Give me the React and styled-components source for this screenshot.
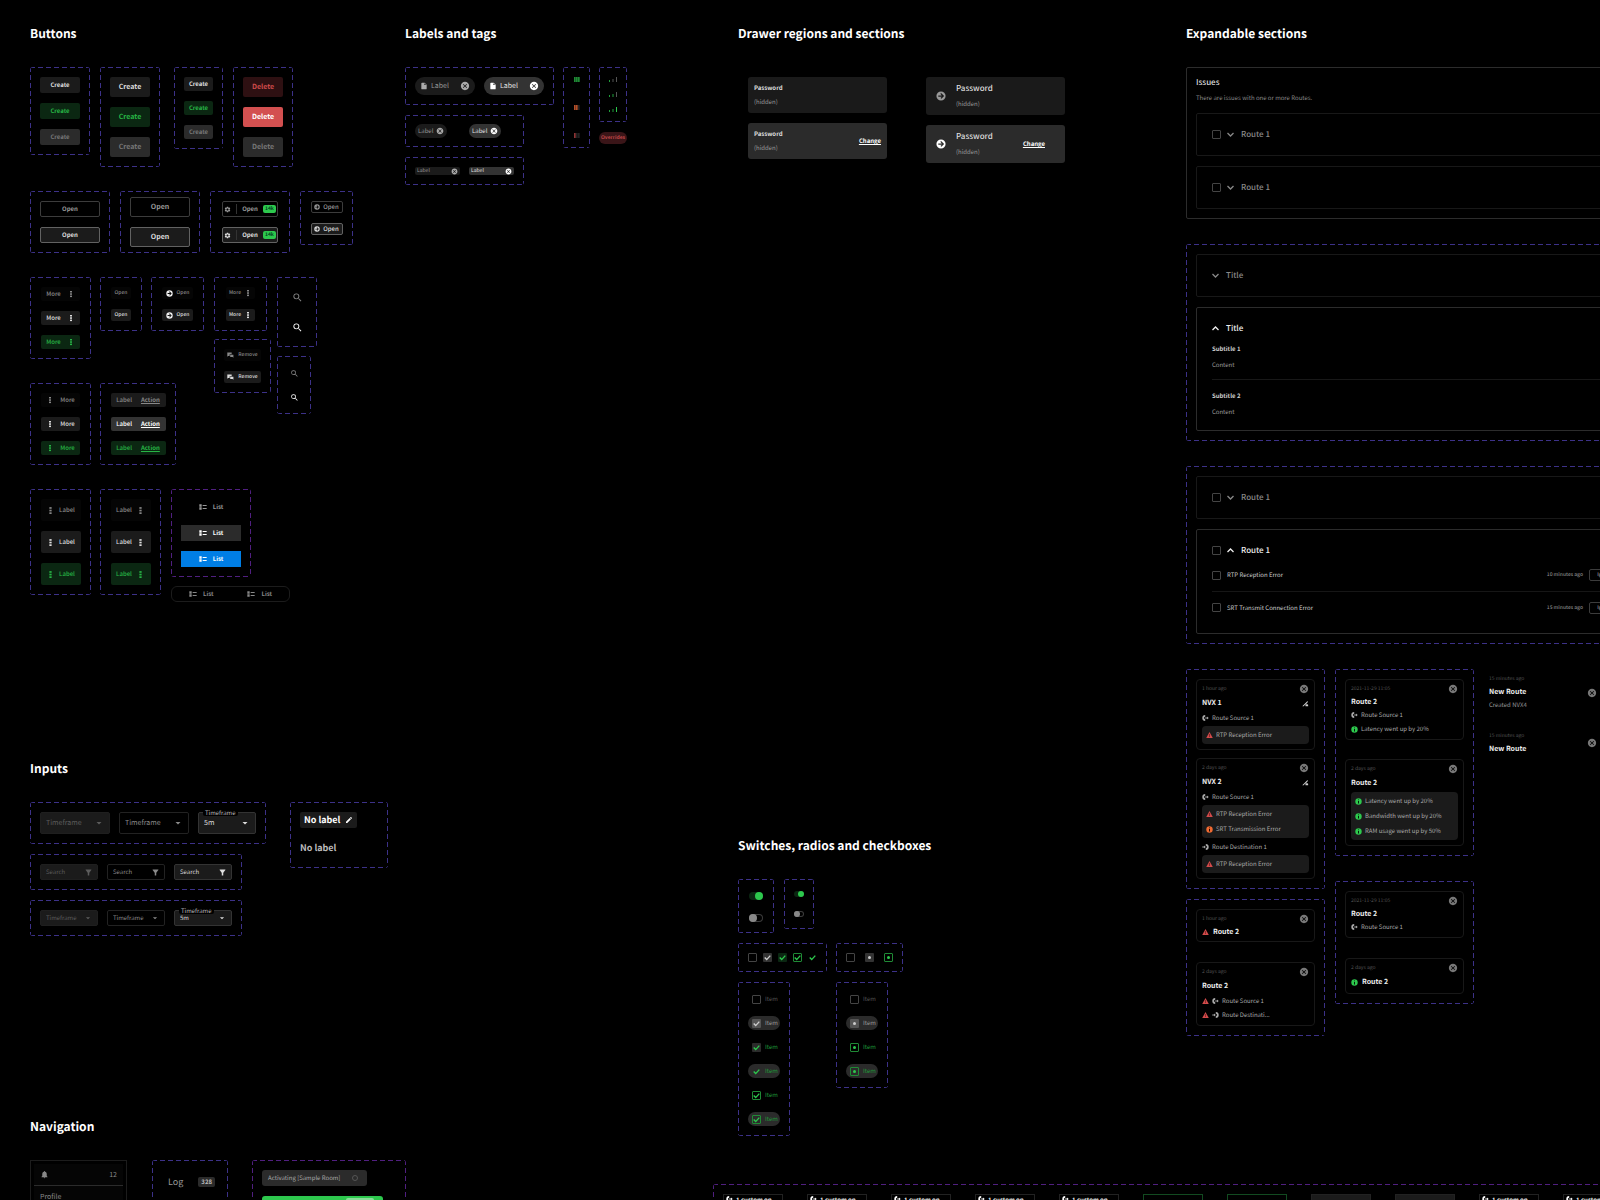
import React from 'react'
import styled, { createGlobalStyle, css } from 'styled-components'
import {
    MdArrowDropDown,
    MdCancel,
    MdEdit,
    MdFilterAlt,
    MdInsertDriveFile,
    MdNotifications,
    MdSearch,
    MdSettings,
} from 'react-icons/md'

/* ---------- icons ---------- */

const ArrowCircle = () => (
    <svg viewBox="0 0 24 24" width="1em" height="1em" fill="currentColor">
        <path fillRule="evenodd" d="M12 1a11 11 0 1 0 0 22 11 11 0 0 0 0-22zM11 5.500l2-.3L19.500 12 13 18.800l-2.200-2 3-3.300H5.500v-3h8.300l-3-3.200z" />
    </svg>
)
const MoreIcon = ({ size = 8 }) => (
    <svg viewBox="0 0 8 8" width={size} height={size} fill="currentColor">
        <rect x="3" y="1" width="2" height="1.500" />
        <rect x="3" y="3.300" width="2" height="1.500" />
        <rect x="3" y="5.600" width="2" height="1.500" />
    </svg>
)
const ListIcon = () => (
    <svg viewBox="0 0 24 16" width="8" height="6" fill="currentColor">
        <path d="M1 0h7v7H1zM1 9h7v7H1zM11 2h12v3H11zM11 11h12v3H11z" />
    </svg>
)
const RemoveIcon = () => (
    <svg viewBox="0 0 24 20" width="7" height="6" fill="currentColor">
        <path d="M1 1h15v6H9v6H4l-3 3z" />
        <path d="M11 9h11v10l-3-2.500h-8z" />
    </svg>
)
const SourceIcon = () => (
    <svg viewBox="0 0 24 20" width="7" height="6" fill="currentColor">
        <path d="M11 0v6a4 4 0 0 0 0 8v6a10 10 0 0 1 0-20z" />
        <path d="M11 8h6V5l6 5-6 5v-3h-6z" />
    </svg>
)
const DestinationIcon = () => (
    <svg viewBox="0 0 24 20" width="7" height="6" fill="currentColor">
        <path d="M13 0a10 10 0 0 1 0 20v-6a4 4 0 0 0 0-8z" />
        <path d="M1 8h6V5l6 5-6 5v-3H1z" />
    </svg>
)
const DeviceIcon = () => (
    <svg viewBox="0 0 24 24" width="7" height="7" fill="#ccc">
        <path d="M1 21 18 4l3 2-9 10h-2l-4 5z" />
        <path d="M12 21v-4l5-3 4 2v5z" />
    </svg>
)
const WarningIcon = () => (
    <svg viewBox="0 0 24 22" width="7" height="6">
        <path d="M12 0 24 22H0z" fill="#d24a4a" />
        <path d="M11 8h2v6h-2zM11 16h2v2.500h-2z" fill="#100" />
    </svg>
)
const InfoIcon = ({ color = '#2dc84d' }) => (
    <svg viewBox="0 0 24 24" width="7" height="7">
        <circle cx="12" cy="12" r="11" fill={color} />
        <path d="M10.500 5h3v3h-3zM10.500 10h3v9h-3z" fill="#000" />
    </svg>
)
const Chevron = ({ up }) => (
    <svg viewBox="0 0 7 7" width="7" height="7" fill="none" stroke="currentColor" strokeWidth="1.300">
        <path d={up ? 'M.5 5 3.500 2l3 3' : 'M.5 2l3 3 3-3'} />
    </svg>
)
const Check = () => (
    <svg viewBox="0 0 7 7" width="7" height="7" fill="none" stroke="currentColor" strokeWidth="1.400">
        <path d="M.7 3.600l2 2L6.300 1.600" />
    </svg>
)
const Battery = ({ level, color }) => (
    <svg viewBox="0 0 6 5" width="6" height="5">
        {[0, 1, 2].map((n) => (
            <rect key={n} x={n * 2} y="0" width="1.700" height="5" fill={n < level ? color : '#222'} />
        ))}
    </svg>
)
const Signal = ({ level }) => (
    <svg viewBox="0 0 8 5" width="8" height="5">
        <rect x="0" y="3" width="1" height="2" fill="#1f9d3a" />
        <rect x="3.500" y="2" width="1" height="3" fill={level > 1 ? '#1f9d3a' : '#555'} />
        <rect x="7" y="0" width="1" height="5" fill={level > 2 ? '#2dc84d' : '#555'} />
    </svg>
)

/* ---------- base ---------- */

const GlobalStyle = createGlobalStyle`
    * { box-sizing: border-box; }
    body {
        margin: 0;
        background: #000;
        color: #fff;
        font-family: "Noto Sans CJK SC", "Open Sans", sans-serif;
        font-size: 6px;
        line-height: 8px;
        text-rendering: geometricPrecision;
    }
    button, input, select { font: inherit; margin: 0; text-rendering: inherit; }
    h2, h3, h4, p { margin: 0; }
    svg { display: block; flex: none; }
`
const Page = styled.main`
    display: grid;
    grid-template-columns: 713px minmax(0, 1fr);
    height: 100vh;
    overflow: hidden;
`
const LeftSide = styled.div`
    padding: 24px 0 0 30px;
`
const RightSide = styled.div`
    padding-top: 24px;
`
const Columns = styled.div`
    display: grid;
    grid-template-columns: ${(p) => p.$cols};
    padding-left: ${(p) => p.$indent || 0}px;
`
const Section = styled.section`
    margin-top: ${(p) => p.$top || 0}px;
`
const Heading = styled.h2`
    font-size: 12px;
    font-weight: 700;
    line-height: 20px;
    margin-bottom: 23px;
`
const Row = styled.div`
    display: flex;
    align-items: flex-start;
    gap: ${(p) => p.$gap ?? 10}px;
    margin-top: ${(p) => p.$top || 0}px;
`
const Stack = styled.div`
    display: flex;
    flex-direction: column;
    align-items: ${(p) => p.$align || 'flex-start'};
    gap: ${(p) => p.$gap ?? 10}px;
    margin-left: ${(p) => p.$left || 0}px;
`
const dash = (dir, color) => `repeating-linear-gradient(${dir}, ${color} 0 5px, transparent 5px 8px)`
const Frame = styled.div`
    --dash: ${(p) => (p.$violet ? '#501f80' : '#3c3188')};
    display: flex;
    flex-direction: ${(p) => (p.$row ? 'row' : 'column')};
    align-items: ${(p) => p.$align || 'center'};
    justify-content: ${(p) => p.$justify || 'flex-start'};
    gap: ${(p) => p.$gap ?? 10}px;
    width: ${(p) => (p.$w ? `${p.$w}px` : 'auto')};
    padding: ${(p) => p.$pad || '10px'};
    border-radius: 3px;
    background:
        ${dash('90deg', 'var(--dash)')} top / 100% 1px no-repeat,
        ${dash('90deg', 'var(--dash)')} bottom / 100% 1px no-repeat,
        ${dash('180deg', 'var(--dash)')} left / 1px 100% no-repeat,
        ${dash('180deg', 'var(--dash)')} right / 1px 100% no-repeat;
`

/* ---------- buttons ---------- */

const tones = {
    dark: css`background: #1b1b1b; color: #ddd;`,
    green: css`background: #0b2712; color: #27b545;`,
    disabled: css`background: #2b2b2b; color: #777;`,
    ghost: css`background: #050505; color: #888;`,
    danger: css`background: #2e1012; color: #cf4b4b;`,
    dangerSolid: css`background: #d35050; color: #fff;`,
    outline: css`background: #000; color: #999; border: 1px solid #3c3c3c;`,
    outlineHover: css`background: #1b1b1b; color: #ddd; border: 1px solid #626262;`,
    gray: css`background: #1b1b1b; color: #888;`,
    grayHover: css`background: #333; color: #fff;`,
    plain: css`background: transparent; color: #888;`,
    plainHover: css`background: transparent; color: #fff;`,
    tab: css`background: #000; color: #999;`,
    tabHover: css`background: #2b2b2b; color: #fff;`,
    tabActive: css`background: #007ee5; color: #fff;`,
}
const Button = styled.button`
    display: flex;
    align-items: center;
    justify-content: center;
    gap: ${(p) => p.$gap ?? 6}px;
    width: ${(p) => p.$w}px;
    height: ${(p) => p.$h}px;
    padding: 0;
    border: 0;
    border-radius: ${(p) => p.$radius ?? 2}px;
    font-size: ${(p) => p.$size || 6}px;
    font-weight: ${(p) => p.$weight || 500};
    line-height: 10px;
    white-space: nowrap;
    ${(p) => tones[p.$tone]}
`
const Badge = styled.span`
    padding: 0 2px;
    border-radius: 2px;
    background: #2dc84d;
    color: #042;
    font-size: 5px;
    font-weight: 700;
    line-height: 8px;
`
const Divider = styled.span`
    width: 1px;
    height: 10px;
    background: #333;
`
const Underline = styled.span`
    font-size: 6px;
    font-weight: 700;
    text-decoration: underline;
`
const WhiteIcon = styled.span`
    color: #eee;
    font-size: 7px;
`
const TabBar = styled.div`
    display: flex;
    justify-content: space-around;
    width: 119px;
    height: 16px;
    border: 1px solid #1c1c1c;
    border-radius: 6px;
`

function ButtonsSection() {
    return (
        <Section>
            <Heading>Buttons</Heading>
            <Row>
                <Frame>
                    {['dark', 'green', 'disabled'].map((t) => (
                        <Button key={t} $tone={t} $w={40} $h={16} $weight={700}>Create</Button>
                    ))}
                </Frame>
                <Frame>
                    {['dark', 'green', 'disabled'].map((t) => (
                        <Button key={t} $tone={t} $w={40} $h={20} $size={7} $weight={700}>Create</Button>
                    ))}
                </Frame>
                <Stack $left={4}>
                    <Frame>
                        {['dark', 'green', 'disabled'].map((t) => (
                            <Button key={t} $tone={t} $w={29} $h={14} $weight={700}>Create</Button>
                        ))}
                    </Frame>
                </Stack>
                <Frame>
                    {['danger', 'dangerSolid', 'disabled'].map((t) => (
                        <Button key={t} $tone={t} $w={40} $h={20} $size={7} $weight={700}>Delete</Button>
                    ))}
                </Frame>
            </Row>

            <Row $top={24}>
                <Frame>
                    <Button $tone="outline" $w={60} $h={16} $weight={700}>Open</Button>
                    <Button $tone="outlineHover" $w={60} $h={16} $weight={700}>Open</Button>
                </Frame>
                <Frame $pad="6px 10px">
                    <Button $tone="outline" $w={60} $h={20} $size={7} $weight={700}>Open</Button>
                    <Button $tone="outlineHover" $w={60} $h={20} $size={7} $weight={700}>Open</Button>
                </Frame>
                <Frame $w={80}>
                    {['outline', 'outlineHover'].map((t) => (
                        <Button key={t} $tone={t} $w={56} $h={16} $gap={5} $weight={700}>
                            <MdSettings size={7} />
                            <Divider />
                            <span>Open</span>
                            <Badge>14k</Badge>
                        </Button>
                    ))}
                </Frame>
                <Frame $w={53}>
                    <Button $tone="outline" $w={32} $h={12} $gap={3}><ArrowCircle />Open</Button>
                    <Button $tone="outlineHover" $w={32} $h={12} $gap={3}><ArrowCircle />Open</Button>
                </Frame>
            </Row>

            <Row $top={24}>
                <Stack $gap={24}>
                    <Row $gap={9}>
                        <Frame $w={61}>
                            {['ghost', 'dark', 'green'].map((t) => (
                                <Button key={t} $tone={t} $w={39} $h={14}>More<MoreIcon /></Button>
                            ))}
                        </Frame>
                        <Frame $w={42}>
                            <Button $tone="ghost" $w={20} $h={12} $size={5}>Open</Button>
                            <Button $tone="dark" $w={20} $h={12} $size={5}>Open</Button>
                        </Frame>
                        <Frame $w={53}>
                            <Button $tone="ghost" $w={31} $h={12} $size={5} $gap={4}><WhiteIcon><ArrowCircle /></WhiteIcon>Open</Button>
                            <Button $tone="dark" $w={31} $h={12} $size={5} $gap={4}><WhiteIcon><ArrowCircle /></WhiteIcon>Open</Button>
                        </Frame>
                    </Row>
                    <Row $gap={9}>
                        <Frame $w={61}>
                            {['ghost', 'dark', 'green'].map((t) => (
                                <Button key={t} $tone={t} $w={39} $h={14}><MoreIcon />More</Button>
                            ))}
                        </Frame>
                        <Frame $w={76}>
                            {['gray', 'grayHover', 'green'].map((t) => (
                                <Button key={t} $tone={t} $w={55} $h={14} $gap={9}>
                                    Label<Underline>Action</Underline>
                                </Button>
                            ))}
                        </Frame>
                    </Row>
                </Stack>
                <Row $gap={6}>
                    <Stack $gap={8}>
                        <Frame $w={53}>
                            <Button $tone="ghost" $w={29} $h={12} $size={5} $gap={3}>More<MoreIcon /></Button>
                            <Button $tone="dark" $w={29} $h={12} $size={5} $gap={3}>More<MoreIcon /></Button>
                        </Frame>
                        <Frame $w={57}>
                            <Button $tone="ghost" $w={37} $h={12} $size={5} $gap={4}><RemoveIcon />Remove</Button>
                            <Button $tone="dark" $w={37} $h={12} $size={5} $gap={4}><RemoveIcon />Remove</Button>
                        </Frame>
                    </Stack>
                    <Stack $gap={9}>
                        <Frame>
                            <Button $tone="plain" $w={20} $h={20} aria-label="Search"><MdSearch size={11} /></Button>
                            <Button $tone="plainHover" $w={20} $h={20} aria-label="Search"><MdSearch size={11} /></Button>
                        </Frame>
                        <Frame>
                            <Button $tone="plain" $w={14} $h={14} aria-label="Search"><MdSearch size={9} /></Button>
                            <Button $tone="plainHover" $w={14} $h={14} aria-label="Search"><MdSearch size={9} /></Button>
                        </Frame>
                    </Stack>
                </Row>
            </Row>

            <Row $top={24}>
                <Row $gap={9}>
                    <Frame $w={61}>
                        {['ghost', 'dark', 'green'].map((t) => (
                            <Button key={t} $tone={t} $w={40} $h={22} $gap={4}><MoreIcon size={9} />Label</Button>
                        ))}
                    </Frame>
                    <Frame $w={61}>
                        {['ghost', 'dark', 'green'].map((t) => (
                            <Button key={t} $tone={t} $w={40} $h={22} $gap={4}>Label<MoreIcon size={9} /></Button>
                        ))}
                    </Frame>
                </Row>
                <Stack $gap={9}>
                    <Frame $violet>
                        {['tab', 'tabHover', 'tabActive'].map((t) => (
                            <Button key={t} $tone={t} $w={60} $h={16} $radius={0} $weight={700}><ListIcon />List</Button>
                        ))}
                    </Frame>
                    <TabBar>
                        <Button $tone="plain" $h={14} $weight={700}><ListIcon />List</Button>
                        <Button $tone="plain" $h={14} $weight={700}><ListIcon />List</Button>
                    </TabBar>
                </Stack>
            </Row>
        </Section>
    )
}

/* ---------- labels and tags ---------- */

const Tag = styled.span`
    display: flex;
    align-items: center;
    gap: ${(p) => p.$gap ?? 3}px;
    width: ${(p) => p.$w}px;
    height: ${(p) => p.$h}px;
    padding: 0 ${(p) => p.$px ?? 3}px;
    border-radius: ${(p) => p.$radius ?? 9}px;
    background: ${(p) => (p.$on ? '#333' : '#1b1b1b')};
    color: ${(p) => (p.$on ? '#fff' : '#aaa')};
    font-size: ${(p) => p.$size || 6}px;
`
const TagText = styled.span`
    flex: 1;
    opacity: 0.85;
`
const IconButton = styled.button`
    display: flex;
    padding: 0;
    border: 0;
    background: none;
    color: inherit;
`
const Override = styled.span`
    padding: 0 2px;
    border-radius: 6px;
    background: #3a1518;
    color: #c04848;
    font-size: 5px;
    font-weight: 700;
    line-height: 12px;
`
const Close = ({ size }) => (
    <IconButton aria-label="Remove"><MdCancel size={size} /></IconButton>
)

function LabelsSection() {
    return (
        <Section>
            <Heading>Labels and tags</Heading>
            <Row $gap={9}>
                <Stack>
                    <Frame $row $gap={9}>
                        {[false, true].map((on) => (
                            <Tag key={String(on)} $on={on} $w={60} $h={18} $px={5} $size={7}>
                                <MdInsertDriveFile size={8} />
                                <TagText>Label</TagText>
                                <Close size={10} />
                            </Tag>
                        ))}
                    </Frame>
                    <Frame $row $gap={22} $w={119} $pad="9px 10px">
                        <Tag $w={32} $h={14}><TagText>Label</TagText><Close size={8} /></Tag>
                        <Tag $on $w={32} $h={14}><TagText>Label</TagText><Close size={8} /></Tag>
                    </Frame>
                    <Frame $row $gap={9} $w={119}>
                        <Tag $w={45} $h={8} $px={2} $radius={2} $size={5}><TagText>Label</TagText><Close size={7} /></Tag>
                        <Tag $on $w={45} $h={8} $px={2} $radius={2} $size={5}><TagText>Label</TagText><Close size={7} /></Tag>
                    </Frame>
                </Stack>
                <Frame $w={27} $gap={23}>
                    <Battery level={3} color="#1f8a35" />
                    <Battery level={2} color="#b4502a" />
                    <Battery level={1} color="#8c3434" />
                </Frame>
                <Stack>
                    <Frame>
                        <Signal level={1} />
                        <Signal level={2} />
                        <Signal level={3} />
                    </Frame>
                    <Override>Overrides</Override>
                </Stack>
            </Row>
        </Section>
    )
}

/* ---------- inputs ---------- */

const fieldTones = {
    disabled: css`background: #1b1b1b; color: #5c5c5c; border-color: #1f1f1f;`,
    normal: css`background: #000; color: #8a8a8a; border-color: #222;`,
    active: css`background: #1b1b1b; color: #ddd; border-color: #333;`,
}
const Field = styled.label`
    position: relative;
    display: flex;
    align-items: center;
    width: ${(p) => p.$w || 58}px;
    height: ${(p) => p.$h || 16}px;
    padding: 0 4px 0 5px;
    border: 1px solid;
    border-radius: 2px;
    font-size: ${(p) => p.$size || 6}px;
    ${(p) => fieldTones[p.$tone]}

    input, select {
        flex: 1;
        width: 0;
        padding: 0;
        border: 0;
        outline: 0;
        appearance: none;
        background: none;
        color: inherit;
        opacity: 1;
    }
    input::placeholder {
        color: inherit;
        opacity: 1;
    }
`
const FloatingLabel = styled.span`
    position: absolute;
    top: -4px;
    left: 4px;
    padding: 0 2px;
    border-radius: 2px;
    background: #000;
    color: #bbb;
    font-size: 6px;
    line-height: 7px;
`
const NoLabel = styled.button`
    display: flex;
    align-items: center;
    gap: 5px;
    height: 16px;
    padding: 0 ${(p) => (p.$edit ? 4 : 0)}px;
    border: 0;
    border-radius: 2px;
    background: ${(p) => (p.$edit ? '#1b1b1b' : 'none')};
    color: ${(p) => (p.$edit ? '#fff' : '#bbb')};
    font-size: 9px;
    font-weight: 700;
    line-height: 14px;
`

function TimeframeField({ tone, w, h, size }) {
    const active = tone === 'active'
    return (
        <Field $tone={tone} $w={w} $h={h} $size={size}>
            {active && <FloatingLabel>Timeframe</FloatingLabel>}
            <select disabled={tone === 'disabled'} aria-label="Timeframe">
                <option>{active ? '5m' : 'Timeframe'}</option>
            </select>
            <MdArrowDropDown size={size === 7 ? 12 : 10} />
        </Field>
    )
}

function InputsSection() {
    return (
        <Section $top={157}>
            <Heading>Inputs</Heading>
            <Row $gap={24}>
                <Stack>
                    <Frame $row $gap={9}>
                        <TimeframeField tone="disabled" w={70} h={22} size={7} />
                        <TimeframeField tone="normal" w={70} h={22} size={7} />
                        <TimeframeField tone="active" w={58} h={22} size={7} />
                    </Frame>
                    <Frame $row $gap={9}>
                        {['disabled', 'normal', 'active'].map((t) => (
                            <Field key={t} $tone={t}>
                                <input type="text" placeholder="Search" aria-label="Search" disabled={t === 'disabled'} />
                                <MdFilterAlt size={9} />
                            </Field>
                        ))}
                    </Frame>
                    <Frame $row $gap={9}>
                        <TimeframeField tone="disabled" />
                        <TimeframeField tone="normal" />
                        <TimeframeField tone="active" />
                    </Frame>
                </Stack>
                <Frame $w={98} $gap={12} $align="flex-start" $pad="10px 10px 12px">
                    <NoLabel $edit>No label<MdEdit size={8} /></NoLabel>
                    <NoLabel>No label</NoLabel>
                </Frame>
            </Row>
        </Section>
    )
}

/* ---------- navigation ---------- */

const NavPanel = styled.nav`
    width: 97px;
    padding: 3px;
    border: 1px solid #1c1c1c;
    margin-right: 15px;
`
const NavItem = styled.a`
    display: flex;
    align-items: center;
    justify-content: space-between;
    height: 22px;
    padding: 0 6px;
    border-bottom: 1px solid #2b2b2b;
    background: #050505;
    color: #888;
    font-size: 7px;
    text-decoration: none;
`
const LogLink = styled.a`
    display: flex;
    align-items: center;
    gap: 15px;
    height: 24px;
    padding-left: 3px;
    color: #999;
    font-size: 9px;
    text-decoration: none;
`
const Count = styled.span`
    padding: 0 3px;
    border-radius: 2px;
    background: #2b2b2b;
    color: #bbb;
    font-size: 6px;
    font-weight: 700;
    line-height: 10px;
`
const Toast = styled.div`
    display: flex;
    align-items: center;
    justify-content: space-between;
    width: ${(p) => p.$w}px;
    height: 16px;
    padding: 2px 9px 2px 6px;
    border-radius: 3px;
    background: ${(p) => (p.$green ? '#2dc84d' : '#2b2b2b')};
    color: #aaa;
    font-size: 6px;
    white-space: nowrap;
`
const Spinner = styled.span`
    width: 6px;
    height: 6px;
    border: 1px solid #555;
    border-radius: 50%;
`
const ToastAction = styled.button`
    width: 28px;
    height: 12px;
    margin-left: auto;
    border: 0;
    border-radius: 2px;
    background: #8ade9a;
`

function NavigationSection() {
    return (
        <Section $top={181}>
            <Heading>Navigation</Heading>
            <Row>
                <NavPanel>
                    <NavItem href="#"><MdNotifications size={9} /><span>12</span></NavItem>
                    <NavItem href="#">Profile</NavItem>
                </NavPanel>
                <Frame $w={76} $pad="10px 10px 40px">
                    <LogLink href="#">Log<Count>328</Count></LogLink>
                </Frame>
                <Stack $left={14}>
                    <Frame $violet $w={154} $align="flex-start">
                        <Toast $w={105}>Activating [Sample Room]<Spinner /></Toast>
                        <Toast $green $w={121}><ToastAction aria-label="Undo" /></Toast>
                    </Frame>
                </Stack>
            </Row>
        </Section>
    )
}

/* ---------- drawers ---------- */

const DrawerCard = styled.div`
    display: flex;
    align-items: center;
    width: 139px;
    height: ${(p) => (p.$big ? 38 : 36)}px;
    padding: ${(p) => (p.$big ? '0 20px 0 10px' : '0 6px')};
    gap: 10px;
    border-radius: 3px;
    background: ${(p) => (p.$on ? '#2b2b2b' : '#1a1a1a')};
    color: ${(p) => (p.$on ? '#fff' : '#999')};
    font-size: 10px;
`
const DrawerText = styled.div`
    flex: 1;
    h3 {
        color: #ddd;
        font-size: ${(p) => (p.$big ? 8 : 6)}px;
        font-weight: ${(p) => (p.$big ? 500 : 700)};
        line-height: ${(p) => (p.$big ? 16 : 14)}px;
    }
    p {
        color: #999;
        font-size: 6px;
        line-height: 14px;
    }
`
const Change = styled.a`
    color: #fff;
    font-size: 6px;
    font-weight: 700;
    text-decoration: underline;
`

function DrawerSection() {
    return (
        <Section>
            <Heading>Drawer regions and sections</Heading>
            <Row $gap={39} $top={33}>
                {[false, true].map((big) => (
                    <Stack key={String(big)} $left={big ? 0 : 10}>
                        {[false, true].map((on) => (
                            <DrawerCard key={String(on)} $big={big} $on={on}>
                                {big && <ArrowCircle />}
                                <DrawerText $big={big}>
                                    <h3>Password</h3>
                                    <p>(hidden)</p>
                                </DrawerText>
                                {on && <Change href="#">Change</Change>}
                            </DrawerCard>
                        ))}
                    </Stack>
                ))}
            </Row>
        </Section>
    )
}

/* ---------- switches, radios, checkboxes ---------- */

const Switch = styled.input`
    appearance: none;
    display: flex;
    align-items: center;
    width: ${(p) => p.$size * 2 - 2}px;
    height: ${(p) => p.$size}px;
    margin: 0;
    border-radius: 8px;
    box-shadow: inset 0 0 0 1px #3c3c3c;
    &::after {
        content: '';
        width: ${(p) => p.$size}px;
        height: ${(p) => p.$size}px;
        border-radius: 50%;
        background: #888;
    }
    &:checked {
        justify-content: flex-end;
        background: #0b2712;
        box-shadow: none;
    }
    &:checked::after {
        background: #2dc84d;
    }
`
const boxTones = {
    empty: css`border: 1px solid #444;`,
    gray: css`background: #333; color: #ccc;`,
    light: css`background: #555; color: #ccc;`,
    darkGreen: css`background: #0b2712; color: #2dc84d;`,
    grayGreen: css`background: #2b2b2b; color: #2dc84d;`,
    outlineGreen: css`border: 1px solid #1f8a35; color: #2dc84d;`,
    bare: css`color: #2dc84d;`,
}
const BoxWrap = styled.span`
    display: grid;
    place-items: center;
    flex: none;
    width: 9px;
    height: 9px;
    border-radius: 1px;
    ${(p) => boxTones[p.$tone]}
    input {
        appearance: none;
        grid-area: 1 / 1;
        width: 100%;
        height: 100%;
        margin: 0;
    }
    svg, i { grid-area: 1 / 1; }
`
const Dot = styled.i`
    width: 3px;
    height: 3px;
    border-radius: 50%;
    background: currentColor;
`
const Item = styled.label`
    display: flex;
    align-items: center;
    gap: 4px;
    width: 32px;
    height: 14px;
    padding-left: 4px;
    border-radius: 7px;
    background: ${(p) => (p.$hover ? '#2b2b2b' : 'none')};
    color: ${(p) => (p.$green ? '#1f9d3a' : p.$hover ? '#999' : '#555')};
`

function Box({ tone, type = 'checkbox', label, id }) {
    const checked = tone !== 'empty'
    return (
        <BoxWrap $tone={tone}>
            <input type={type} id={id} defaultChecked={checked} aria-label={label} />
            {checked && (type === 'radio' ? <Dot /> : <Check />)}
        </BoxWrap>
    )
}

const checkItems = [
    ['empty', false, false],
    ['light', true, false],
    ['grayGreen', false, true],
    ['bare', true, true],
    ['outlineGreen', false, true],
    ['outlineGreen', true, true],
]
const radioItems = [
    ['empty', false, false],
    ['light', true, false],
    ['outlineGreen', false, true],
    ['outlineGreen', true, true],
]

function SwitchesSection() {
    return (
        <Section $top={673}>
            <Heading>Switches, radios and checkboxes</Heading>
            <Row>
                <Frame $w={36} $gap={14} $pad="13px 10px 11px">
                    <Switch type="checkbox" defaultChecked $size={8} aria-label="Enabled" />
                    <Switch type="checkbox" $size={8} aria-label="Disabled" />
                </Frame>
                <Frame $w={30} $gap={14} $pad="12px 10px">
                    <Switch type="checkbox" defaultChecked $size={6} aria-label="Enabled" />
                    <Switch type="checkbox" $size={6} aria-label="Disabled" />
                </Frame>
            </Row>
            <Row $top={10} $gap={9}>
                <Stack>
                    <Frame $row $gap={6}>
                        {['empty', 'gray', 'darkGreen', 'outlineGreen', 'bare'].map((t) => (
                            <Box key={t} tone={t} label={t} />
                        ))}
                    </Frame>
                    <Frame $w={52}>
                        {checkItems.map(([tone, hover, green], i) => (
                            <Item key={i} $hover={hover} $green={green}><Box tone={tone} />Item</Item>
                        ))}
                    </Frame>
                </Stack>
                <Stack>
                    <Frame $row>
                        {['empty', 'gray', 'outlineGreen'].map((t) => (
                            <Box key={t} type="radio" tone={t} label={t} />
                        ))}
                    </Frame>
                    <Frame $w={52}>
                        {radioItems.map(([tone, hover, green], i) => (
                            <Item key={i} $hover={hover} $green={green}><Box type="radio" tone={tone} />Item</Item>
                        ))}
                    </Frame>
                </Stack>
            </Row>
        </Section>
    )
}

/* ---------- expandable sections ---------- */

const Wide = styled.div`
    display: grid;
    gap: 25px;
    margin-right: -47px;
`
const Panel = styled.div`
    display: grid;
    gap: 10px;
    padding: 9px;
    border: 1px solid #2c2c2c;
    border-radius: 2px;
`
const PanelTitle = styled.div`
    display: grid;
    gap: 3px;
    h3 { font-size: 8px; font-weight: 500; line-height: 12px; color: #ddd; }
    p { font-size: 6px; line-height: 11px; color: #888; }
`
const Expandable = styled.div`
    padding: 0 15px;
    border: 1px solid ${(p) => (p.$open ? '#2c2c2c' : '#181818')};
    border-radius: 2px;
    padding-bottom: ${(p) => (p.$open ? 10 : 0)}px;
`
const ExpandHead = styled.div`
    display: flex;
    align-items: center;
    gap: 6px;
    height: 41px;
`
const ExpandButton = styled.button`
    display: flex;
    align-items: center;
    gap: 7px;
    padding: 0;
    border: 0;
    background: none;
    color: ${(p) => (p.$open ? '#eee' : '#888')};
    font-size: 8px;
    font-weight: 500;
`
const DetailList = styled.div`
    margin-top: -8px;
`
const Detail = styled.div`
    & + & {
        margin-top: 6px;
        padding-top: 8px;
        border-top: 1px solid #181818;
    }
    h4 { font-size: 6px; font-weight: 700; line-height: 16px; color: #ccc; }
    p { font-size: 6px; line-height: 16px; color: #999; }
`
const IssueList = styled.div`
    margin-top: -12px;
`
const IssueRow = styled.div`
    display: flex;
    align-items: center;
    gap: 6px;
    height: 32px;
    color: #ccc;
    & + & {
        border-top: 1px solid #161616;
    }
    label { flex: 1; }
    time { font-size: 5px; font-weight: 500; color: #888; }
`

function Expand({ title, open, check, children }) {
    return (
        <Expandable $open={open}>
            <ExpandHead>
                {check && <Box tone="empty" label={title} />}
                <ExpandButton $open={open} aria-expanded={!!open}>
                    <Chevron up={open} />
                    {title}
                </ExpandButton>
            </ExpandHead>
            {children}
        </Expandable>
    )
}

const issues = [
    { id: 'rtp', name: 'RTP Reception Error', time: '10 minutes ago' },
    { id: 'srt', name: 'SRT Transmit Connection Error', time: '15 minutes ago' },
]

function ExpandableSection() {
    return (
        <Section>
            <Heading>Expandable sections</Heading>
            <Wide>
                <Panel>
                    <PanelTitle>
                        <h3>Issues</h3>
                        <p>There are issues with one or more Routes.</p>
                    </PanelTitle>
                    <Expand title="Route 1" check />
                    <Expand title="Route 1" check />
                </Panel>
                <Frame $align="stretch">
                    <Expand title="Title" />
                    <Expand title="Title" open>
                        <DetailList>
                            <Detail>
                                <h4>Subtitle 1</h4>
                                <p>Content</p>
                            </Detail>
                            <Detail>
                                <h4>Subtitle 2</h4>
                                <p>Content</p>
                            </Detail>
                        </DetailList>
                    </Expand>
                </Frame>
                <Frame $align="stretch">
                    <Expand title="Route 1" check />
                    <Expand title="Route 1" check open>
                        <IssueList>
                            {issues.map((issue) => (
                                <IssueRow key={issue.id}>
                                    <Box tone="empty" id={issue.id} />
                                    <label htmlFor={issue.id}>{issue.name}</label>
                                    <time>{issue.time}</time>
                                    <Button $tone="outline" $w={32} $h={12} $size={5}>Ignore</Button>
                                </IssueRow>
                            ))}
                        </IssueList>
                    </Expand>
                </Frame>
            </Wide>
            <EventCards />
        </Section>
    )
}

/* ---------- event cards ---------- */

const Card = styled.article`
    display: flex;
    flex-direction: column;
    width: 119px;
    padding: 3px 5px;
    border: 1px solid #181818;
    border-radius: 4px;
`
const CardTop = styled.div`
    display: flex;
    align-items: center;
    justify-content: space-between;
    height: 12px;
    color: #777;
    time { font-size: 5px; color: #555; }
`
const CardTitle = styled.h3`
    display: flex;
    align-items: center;
    gap: 4px;
    height: ${(p) => (p.$tight ? 13 : 16)}px;
    font-size: 7px;
    font-weight: 700;
    color: #eee;
    span + svg {
        margin-left: auto;
    }
`
const CardLine = styled.div`
    display: flex;
    align-items: center;
    gap: 3px;
    height: 14px;
    color: #aaa;
    font-size: 6px;
`
const Alerts = styled.div`
    display: grid;
    gap: 1px;
    margin: 1px 0 2px;
    padding: 2px 4px;
    border-radius: 4px;
    background: #1b1b1b;
`
const BareCard = styled.div`
    display: flex;
    align-items: center;
    justify-content: space-between;
    width: 108px;
    padding-top: 4px;
    color: #777;
    p { color: #999; line-height: 14px; }
    time { display: block; color: #555; font-size: 5px; line-height: 12px; }
`

const Source = () => <CardLine><SourceIcon />Route Source 1</CardLine>
const Destination = () => <CardLine><DestinationIcon />Route Destination 1</CardLine>
const Reception = () => <CardLine><WarningIcon />RTP Reception Error</CardLine>
const Top = ({ time }) => (
    <CardTop><time>{time}</time><Close size={10} /></CardTop>
)

function EventCards() {
    return (
        <Row $top={25}>
            <Stack>
                <Frame $gap={8}>
                    <Card>
                        <Top time="1 hour ago" />
                        <CardTitle><span>NVX 1</span><DeviceIcon /></CardTitle>
                        <Source />
                        <Alerts><Reception /></Alerts>
                    </Card>
                    <Card>
                        <Top time="2 days ago" />
                        <CardTitle><span>NVX 2</span><DeviceIcon /></CardTitle>
                        <Source />
                        <Alerts>
                            <Reception />
                            <CardLine><InfoIcon color="#ef6a32" />SRT Transmission Error</CardLine>
                        </Alerts>
                        <Destination />
                        <Alerts><Reception /></Alerts>
                    </Card>
                </Frame>
                <Frame $gap={20}>
                    <Card>
                        <Top time="1 hour ago" />
                        <CardTitle $tight><WarningIcon /><span>Route 2</span></CardTitle>
                    </Card>
                    <Card>
                        <Top time="2 days ago" />
                        <CardTitle>Route 2</CardTitle>
                        <CardLine><WarningIcon /><SourceIcon />Route Source 1</CardLine>
                        <CardLine><WarningIcon /><DestinationIcon />Route Destinati...</CardLine>
                    </Card>
                </Frame>
            </Stack>
            <Stack $gap={25}>
                <Frame $gap={19}>
                    <Card>
                        <Top time="2021-11-29 11:05" />
                        <CardTitle $tight>Route 2</CardTitle>
                        <Source />
                        <CardLine><InfoIcon />Latency went up by 20%</CardLine>
                    </Card>
                    <Card>
                        <Top time="2 days ago" />
                        <CardTitle>Route 2</CardTitle>
                        <Alerts>
                            <CardLine><InfoIcon />Latency went up by 20%</CardLine>
                            <CardLine><InfoIcon />Bandwidth went up by 20%</CardLine>
                            <CardLine><InfoIcon />RAM usage went up by 50%</CardLine>
                        </Alerts>
                    </Card>
                </Frame>
                <Frame $gap={20}>
                    <Card>
                        <Top time="2021-11-29 11:05" />
                        <CardTitle $tight>Route 2</CardTitle>
                        <Source />
                    </Card>
                    <Card>
                        <Top time="2 days ago" />
                        <CardTitle><InfoIcon /><span>Route 2</span></CardTitle>
                    </Card>
                </Frame>
            </Stack>
            <Stack $gap={14} $left={5}>
                <BareCard>
                    <div>
                        <time>15 minutes ago</time>
                        <CardTitle $tight>New Route</CardTitle>
                        <p>Created NVX4</p>
                    </div>
                    <Close size={10} />
                </BareCard>
                <BareCard>
                    <div>
                        <time>15 minutes ago</time>
                        <CardTitle $tight>New Route</CardTitle>
                    </div>
                    <Close size={10} />
                </BareCard>
            </Stack>
        </Row>
    )
}

/* ---------- node strip ---------- */

const Strip = styled.div`
    margin: 48px -40px 0 0;
`
const NodeCard = styled.div`
    display: flex;
    align-items: flex-start;
    gap: 3px;
    flex: none;
    width: 60px;
    height: 30px;
    padding: 1px 2px;
    border: 1px solid ${(p) => (p.$tone === 'green' ? '#124a20' : '#222')};
    background: ${(p) => (p.$tone === 'gray' ? '#1b1b1b' : '#000')};
    font-size: 6px;
    font-weight: 700;
`
const nodes = ['dark', 'dark', 'dark', 'dark', 'dark', 'green', 'green', 'gray', 'gray', 'dark', 'dark']

function NodeStrip() {
    return (
        <Strip>
            <Frame $row $violet $gap={24}>
                {nodes.map((tone, i) => (
                    <NodeCard key={i} $tone={tone}>
                        {tone === 'dark' && <><SourceIcon />1 custom op</>}
                    </NodeCard>
                ))}
            </Frame>
        </Strip>
    )
}

function App() {
    return (
        <>
            <GlobalStyle />
            <Page>
                <LeftSide>
                    <Columns $cols="375px 1fr">
                        <ButtonsSection />
                        <LabelsSection />
                    </Columns>
                    <InputsSection />
                    <NavigationSection />
                </LeftSide>
                <RightSide>
                    <Columns $cols="448px minmax(0, 1fr)" $indent={25}>
                        <div>
                            <DrawerSection />
                            <SwitchesSection />
                        </div>
                        <ExpandableSection />
                    </Columns>
                    <NodeStrip />
                </RightSide>
            </Page>
        </>
    )
}

export default App
